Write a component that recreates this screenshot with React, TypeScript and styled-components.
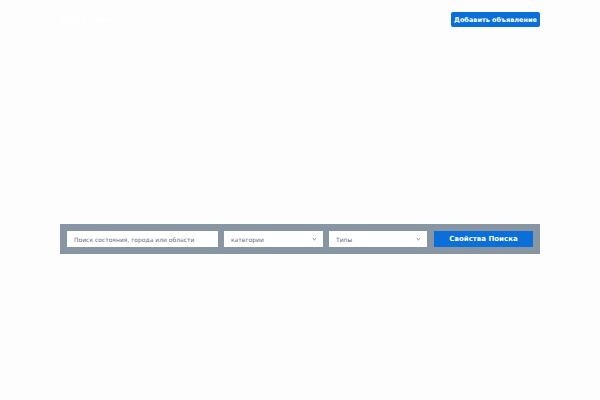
import React from 'react'
import styled, { createGlobalStyle } from 'styled-components'

const GlobalStyle = createGlobalStyle`
  html, body {
    margin: 0;
    padding: 0;
    background: #fdfdfd;
    font-family: "DejaVu Sans", "Liberation Sans", sans-serif;
  }
`

const Page = styled.div`
  width: 600px;
  height: 400px;
  background: #fdfdfd;
  overflow: hidden;
`

const Hero = styled.div`
  display: flex;
  flex-direction: column;
  height: 224px;
`

const Header = styled.div`
  display: flex;
  align-items: center;
  justify-content: space-between;
  padding: 12px 60px 0 60px;
  height: 15px;
`

const Logo = styled.div`
  color: #ffffff;
  font-size: 9px;
  font-weight: bold;
  width: 150px;
`

const Nav = styled.div`
  display: flex;
  gap: 22px;
  flex: 1;
  padding-left: 20px;
`

const NavLink = styled.a`
  color: #ffffff;
  font-size: 7px;
  text-decoration: none;
`

const AddButton = styled.button`
  background: #0a6fd8;
  color: #ffffff;
  border: none;
  border-radius: 2px;
  height: 15px;
  padding: 0;
  font-family: "DejaVu Sans", sans-serif;
  font-size: 6.5px;
  font-weight: bold;
  width: 89px;
  white-space: nowrap;
  flex-shrink: 0;
`

const SearchBar = styled.div`
  margin: 0 60px;
  height: 30px;
  box-sizing: border-box;
  background: #8896a4;
  display: flex;
  align-items: center;
  gap: 6px;
  padding: 0 7px;
`

const Field = styled.div<{ $w: number }>`
  width: ${({ $w }) => $w}px;
  height: 16px;
  background: #ffffff;
  display: flex;
  align-items: center;
  justify-content: space-between;
  padding: 0 6px 0 7px;
  box-sizing: border-box;
  font-size: 6px;
  color: #5f6b7a;
  flex-shrink: 0;
  white-space: nowrap;
`

const Chevron = () => (
  <svg width="5" height="4" viewBox="0 0 5 4">
    <path d="M0.8 1.2 L2.5 2.8 L4.2 1.2" stroke="#5f6b7a" strokeWidth="0.8" fill="none" />
  </svg>
)

const SearchButton = styled.button`
  width: 99px;
  height: 16px;
  padding: 0;
  background: #0a6fd8;
  color: #ffffff;
  border: none;
  font-family: "DejaVu Sans", sans-serif;
  font-size: 7px;
  font-weight: bold;
  flex-shrink: 0;
  margin-left: 1px;
`

export default function App() {
  return (
    <Page>
      <GlobalStyle />
      <Hero>
        <Header>
          <Logo>Недвижимость</Logo>
          <Nav>
            <NavLink>Главная</NavLink>
            <NavLink>Объявления</NavLink>
            <NavLink>О нас</NavLink>
            <NavLink>Контакты</NavLink>
          </Nav>
          <AddButton>Добавить объявление</AddButton>
        </Header>
      </Hero>
      <SearchBar>
        <Field $w={151}>Поиск состояния, города или области</Field>
        <Field $w={99}>
          категории
          <Chevron />
        </Field>
        <Field $w={98}>
          Типы
          <Chevron />
        </Field>
        <SearchButton>Свойства Поиска</SearchButton>
      </SearchBar>
    </Page>
  )
}
